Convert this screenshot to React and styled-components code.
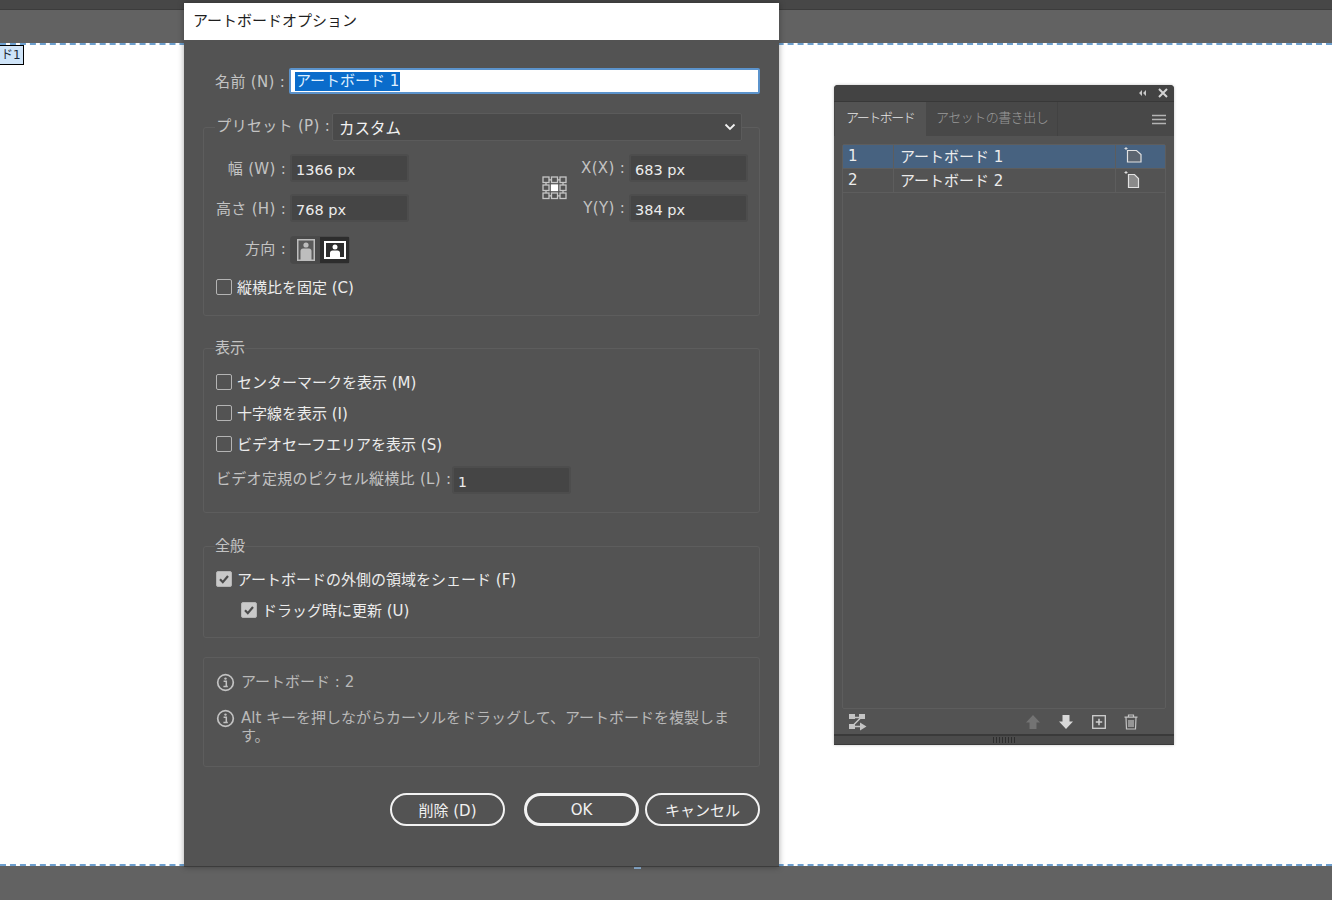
import styled, { createGlobalStyle } from 'styled-components'

const GlobalStyle = createGlobalStyle`
    * {
        box-sizing: border-box;
    }
    html, body {
        margin: 0;
        height: 100%;
        overflow: hidden;
        background: #636363;
    }
    body {
        font-family: "DejaVu Sans", "Noto Sans CJK JP", sans-serif;
        font-size: 15px;
    }
`

// Workspace behind the windows
const Workspace = styled.div`
    position: relative;
    width: 1332px;
    height: 900px;
    display: flex;
    flex-direction: column;
    overflow: hidden;
`
const MenuStrip = styled.div`
    height: 10px;
    background: #474747;
    border-bottom: 1px solid #3c3c3c;
`
const Pasteboard = styled.div`
    flex: ${(props) => (props.$grow ? 1 : 'none')};
    height: 33px;
    background: #626262;
`
const Artboard = styled.div`
    position: relative;
    height: 823px;
    background: #fff;
    border-top: 2px dashed #6d9fce;
    border-bottom: 2px dashed #6d9fce;
`
const ArtboardTag = styled.span`
    position: absolute;
    left: -1px;
    top: 0;
    width: 25px;
    height: 20px;
    padding-left: 1px;
    font-size: 12px;
    line-height: 18px;
    color: #1d2a38;
    background: #cfe4f8;
    border: 1px solid #000;
`
const Handle = styled.span`
    position: absolute;
    left: 634px;
    top: 867px;
    width: 7px;
    height: 2px;
    background: #8fb4d8;
`

// Dialog
const Dialog = styled.div`
    position: absolute;
    left: 184px;
    top: 3px;
    width: 595px;
    height: 864px;
    display: flex;
    flex-direction: column;
    background: #535353;
    border-bottom: 1px solid #3c3c3c;
    box-shadow: 0 0 6px rgba(0, 0, 0, 0.35);
`
const DialogTitle = styled.div`
    height: 37px;
    padding-left: 9px;
    font-size: 15px;
    line-height: 37px;
    color: #1f1f1f;
    background: #fff;
`
const DialogBody = styled.div`
    display: flex;
    flex-direction: column;
    padding: 28px 19px 0;
`
const Label = styled.label`
    width: ${(props) => props.$width || 70}px;
    flex: none;
    margin-top: -2px;
    text-align: right;
    white-space: nowrap;
    letter-spacing: 0.3px;
    color: #c3c3c3;
`
const LatinLabel = styled(Label)`
    margin-top: 0;
`
const RaisedLabel = styled(Label)`
    margin-top: -5px;
`
const NameRow = styled.div`
    display: flex;
    align-items: center;
    gap: 4px;
    padding-left: 12px;
    margin-bottom: 19px;
`
const NameField = styled.div`
    flex: 1;
    height: 26px;
    padding-left: 4px;
    display: flex;
    align-items: center;
    background: #fff;
    border: 2px solid #5b93cc;
    border-radius: 2px;
`
const Selected = styled.span`
    padding: 0 1px;
    line-height: 19px;
    color: #dff0ff;
    background: #0a6ccb;
`
const Group = styled.fieldset`
    margin: ${(props) => props.$gap || 0}px 0 0;
    padding: ${(props) => props.$pad || '8px 12px 13px'};
    min-width: 0;
    border: 1px solid #5d5d5d;
    border-radius: 3px;
`
const Legend = styled.legend`
    margin-left: -1px;
    padding: 0;
    line-height: 20px;
    color: #c3c3c3;
`
const PresetLegend = styled.legend`
    width: 527px;
    margin-left: -1px;
    padding: 0;
    display: flex;
    align-items: center;
    gap: 2px;
`
const Select = styled.div`
    flex: 1;
    height: 28px;
    padding: 0 5px 0 6px;
    display: flex;
    align-items: center;
    justify-content: space-between;
    font-size: 15.5px;
    color: #f2f2f2;
    background: #4a4a4a;
    border: 1px solid #5b5b5b;
    border-radius: 2px;
`
const SizeGrid = styled.div`
    display: flex;
    justify-content: space-between;
`
const FieldColumn = styled.div`
    display: flex;
    flex-direction: column;
    gap: 12px;
`
const FieldRow = styled.div`
    display: flex;
    align-items: center;
    gap: 4px;
`
const AnchorColumn = styled.div`
    display: flex;
    align-items: center;
    margin-left: 133px;
`
const RightColumn = styled(FieldColumn)`
    margin-left: 11px;
`
const NumberInput = styled.div`
    width: ${(props) => props.$width || 119}px;
    height: 28px;
    padding: 3px 0 0 4px;
    display: flex;
    align-items: center;
    font-size: ${(props) => props.$size || 14.5}px;
    color: #ececec;
    background: #454545;
    border: 2px solid #4d4d4d;
    border-radius: 3px;
`
const OrientationRow = styled(FieldRow)`
    margin-top: 14px;
`
const Segments = styled.div`
    display: flex;
    width: 60px;
    height: 28px;
    border: 1px solid #4a4a4a;
    border-radius: 3px;
`
const Segment = styled.div`
    flex: 1;
    display: flex;
    align-items: center;
    justify-content: center;
    background: ${(props) => (props.$active ? '#2d2d2d' : '#494949')};
`
const CheckRow = styled.div`
    height: 31px;
    display: flex;
    align-items: center;
    gap: 5px;
    margin-top: ${(props) => props.$gap || 0}px;
    padding-left: ${(props) => (props.$indent ? 25 : 0)}px;
    color: #ececec;
`
const Box = styled.span`
    width: 16px;
    height: 16px;
    flex: none;
    display: flex;
    align-items: center;
    justify-content: center;
    border: 1.5px solid #b4b4b4;
    border-radius: 2px;
    background: ${(props) => (props.$checked ? '#c9c9c9' : 'transparent')};
`
const RatioRow = styled(FieldRow)`
    margin-top: 7px;
`
const InfoLine = styled.div`
    display: flex;
    gap: 6px;
    line-height: 18px;
    color: #b9b9b9;
    margin-top: ${(props) => props.$gap || 0}px;
`
const InfoIcon = styled.svg`
    width: 19px;
    height: 19px;
    flex: none;
`
const Footer = styled.div`
    display: flex;
    justify-content: flex-end;
    margin-top: 26px;
`
const PillButton = styled.button`
    width: 115px;
    height: 33px;
    margin-left: ${(props) => props.$gap || 0}px;
    padding: 0;
    font: inherit;
    color: #f0f0f0;
    background: transparent;
    border: ${(props) => (props.$primary ? 3 : 2)}px solid #f2f2f2;
    border-radius: 17px;
`

// Artboards panel
const Panel = styled.div`
    position: absolute;
    left: 834px;
    top: 85px;
    width: 340px;
    height: 660px;
    display: flex;
    flex-direction: column;
    background: #535353;
    border-radius: 4px 4px 0 0;
    box-shadow: 0 0 3px rgba(0, 0, 0, 0.25);
`
const PanelTitle = styled.div`
    height: 17px;
    padding-right: 6px;
    display: flex;
    align-items: center;
    justify-content: flex-end;
    gap: 11px;
    background: #434343;
    border-radius: 4px 4px 0 0;
    border-bottom: 1px solid #383838;
`
const Tabs = styled.div`
    height: 34px;
    display: flex;
    align-items: stretch;
    background: #484848;
`
const Tab = styled.div`
    width: ${(props) => props.$width}px;
    margin-left: ${(props) => (props.$active ? 1 : 0)}px;
    padding: 5px 0 0 ${(props) => (props.$active ? 11 : 9)}px;
    font-size: 13px;
    letter-spacing: ${(props) => (props.$active ? -1.5 : -0.5)}px;
    font-weight: 300;
    white-space: nowrap;
    color: ${(props) => (props.$active ? '#e6e6e6' : '#9a9a9a')};
    background: ${(props) => (props.$active ? '#535353' : '#484848')};
    border-right: 1px solid ${(props) => (props.$active ? '#484848' : '#424242')};
`
const TabSpacer = styled.div`
    flex: 1;
    display: flex;
    align-items: center;
    justify-content: flex-end;
    padding-right: 8px;
`
const List = styled.div`
    flex: 1;
    margin: 8px 8px 0;
    border: 1px solid #5d5d5d;
    border-radius: 2px;
`
const ListRow = styled.div`
    height: 24px;
    display: grid;
    grid-template-columns: 50px 222px 1fr;
    align-items: stretch;
    color: #ececec;
    background: ${(props) => (props.$selected ? '#476280' : 'transparent')};
    border-bottom: 1px solid #5d5d5d;
`
const ListCell = styled.div`
    display: flex;
    align-items: center;
    padding-left: ${(props) => props.$pad}px;
    padding-bottom: 2px;
    border-left: ${(props) => (props.$first ? 'none' : '1px solid #5d5d5d')};
`
const PanelTools = styled.div`
    height: 25px;
    display: flex;
    align-items: center;
    padding: 0 36px 0 15px;
    gap: 17px;
`
const ToolSpacer = styled.div`
    flex: 1;
`
const PanelGrip = styled.div`
    height: 11px;
    display: flex;
    justify-content: center;
    align-items: center;
    gap: 2px;
    background: #4b4b4b;
    border-top: 2px solid #3a3a3a;
    border-bottom: 1px solid #3a3a3a;
`
const GripTick = styled.span`
    width: 1px;
    height: 6px;
    background: #2e2e2e;
`

function InfoGlyph() {
    return (
        <InfoIcon viewBox="0 0 19 19">
            <circle cx="9.5" cy="9.5" r="7.8" fill="none" stroke="#c2c2c2" strokeWidth="1.7" />
            <circle cx="9.5" cy="5.6" r="1.2" fill="#c2c2c2" />
            <path d="M7.6 8.2h2.7v5.2M7.4 13.6h4.4" fill="none" stroke="#c2c2c2" strokeWidth="1.5" />
        </InfoIcon>
    )
}

function CheckBox({ checked }) {
    return (
        <Box $checked={checked}>
            {checked && (
                <svg width="12" height="12" viewBox="0 0 12 12">
                    <path d="M2 6.3l2.8 2.9L10 3" fill="none" stroke="#4c4c4c" strokeWidth="2.2" />
                </svg>
            )}
        </Box>
    )
}

function AnchorGlyph() {
    const cells = []
    for (let row = 0; row < 3; row++) {
        for (let col = 0; col < 3; col++) {
            const center = row === 1 && col === 1
            cells.push(
                <rect
                    key={`${row}-${col}`}
                    x={1 + col * 8.5}
                    y={1 + row * 8}
                    width="6"
                    height="5.5"
                    fill={center ? '#fff' : 'none'}
                    stroke={center ? '#fff' : '#c6c6c6'}
                    strokeWidth="1.3"
                />
            )
        }
    }
    return (
        <svg width="26" height="24" viewBox="0 0 26 24">
            {cells}
            <path d="M7 3.8h2.5M15.5 3.8H18M7 19.8h2.5M15.5 19.8H18M4 6.5V9M4 14.5V17M21 6.5V9M21 14.5V17" stroke="#c6c6c6" strokeWidth="1.3" />
        </svg>
    )
}

function PortraitGlyph() {
    return (
        <svg width="18" height="22" viewBox="0 0 18 22">
            <rect x="0.75" y="0.75" width="16.5" height="20.5" fill="#5a5a5a" stroke="#bdbdbd" strokeWidth="1.5" />
            <circle cx="9" cy="6" r="2.6" fill="#bdbdbd" />
            <path d="M3.5 21v-9c0-1.5 1-2.5 2.5-2.5h6c1.5 0 2.5 1 2.5 2.5v9z" fill="#bdbdbd" />
        </svg>
    )
}

function LandscapeGlyph() {
    return (
        <svg width="22" height="18" viewBox="0 0 22 18">
            <rect x="1" y="1" width="20" height="16" fill="#2d2d2d" stroke="#fff" strokeWidth="2" />
            <circle cx="11" cy="6" r="2.5" fill="#fff" />
            <path d="M6 17v-5c0-1.5 1-2.5 2.5-2.5h5c1.5 0 2.5 1 2.5 2.5v5z" fill="#fff" />
        </svg>
    )
}

function PageGlyph({ wide }) {
    return wide ? (
        <svg width="20" height="18" viewBox="0 0 20 18">
            <path d="M3 0v3M1.5 1.500h3" stroke="#ddd" strokeWidth="1" />
            <path d="M4.5 3.500h9l4.500 4v7.500h-13.500z" fill="#5c6570" stroke="#e2e2e2" strokeWidth="1.2" />
        </svg>
    ) : (
        <svg width="20" height="18" viewBox="0 0 20 18">
            <path d="M3 0v3M1.5 1.500h3" stroke="#ddd" strokeWidth="1" />
            <path d="M5.5 3.500h6l4 4v9h-10z" fill="#8a8a8a" stroke="#e2e2e2" strokeWidth="1.2" />
        </svg>
    )
}

function RearrangeGlyph() {
    return (
        <svg width="18" height="18" viewBox="0 0 18 18">
            <g fill="#c4c4c4">
                <rect x="0" y="1" width="6" height="5" />
                <rect x="0" y="11" width="6" height="5" />
                <rect x="10" y="1" width="6" height="5" />
                <path d="M11 9.500l6.500 4-6.500 4z" />
            </g>
            <path d="M5 4.500h6M4.500 12l7-7M5 13.500h7" fill="none" stroke="#c4c4c4" strokeWidth="1.5" />
        </svg>
    )
}

function ArrowGlyph({ up, color }) {
    return (
        <svg width="16" height="16" viewBox="0 0 16 16">
            <path
                d={up ? 'M8 1l7 7.500h-3.500V15h-7V8.500H1z' : 'M8 15l7-7.500h-3.500V1h-7v6.500H1z'}
                fill={color}
            />
        </svg>
    )
}

function NewGlyph() {
    return (
        <svg width="16" height="16" viewBox="0 0 16 16">
            <rect x="1.7" y="1.7" width="12.6" height="12.6" fill="none" stroke="#d0d0d0" strokeWidth="1.3" />
            <path d="M8 4.800v6.400M4.800 8h6.400" stroke="#d0d0d0" strokeWidth="1.5" />
        </svg>
    )
}

function TrashGlyph() {
    return (
        <svg width="14" height="16" viewBox="0 0 14 16">
            <path d="M0.5 3.200h13M4.500 3V1h5v2M2 3.500l.5 11.500h9l.5-11.500M5 6v7M7 6v7M9 6v7" fill="none" stroke="#c4c4c4" strokeWidth="1.2" />
        </svg>
    )
}

function App() {
    return (
        <>
            <GlobalStyle />
            <Workspace>
                <MenuStrip />
                <Pasteboard />
                <Artboard>
                    <ArtboardTag>ド1</ArtboardTag>
                </Artboard>
                <Pasteboard $grow />
                <Handle />

                <Dialog>
                    <DialogTitle>アートボードオプション</DialogTitle>
                    <DialogBody>
                        <NameRow>
                            <Label>名前 (N) :</Label>
                            <NameField>
                                <Selected>アートボード 1</Selected>
                            </NameField>
                        </NameRow>

                        <Group $pad="13px 12px 13px">
                            <PresetLegend>
                                <RaisedLabel $width={115}>プリセット (P) :</RaisedLabel>
                                <Select>
                                    カスタム
                                    <svg width="12" height="8" viewBox="0 0 12 8">
                                        <path d="M1.5 1.500L6 6l4.500-4.500" fill="none" stroke="#f2f2f2" strokeWidth="1.8" />
                                    </svg>
                                </Select>
                            </PresetLegend>
                            <SizeGrid>
                                <FieldColumn>
                                    <FieldRow>
                                        <Label>幅 (W) :</Label>
                                        <NumberInput>1366 px</NumberInput>
                                    </FieldRow>
                                    <FieldRow>
                                        <Label>高さ (H) :</Label>
                                        <NumberInput>768 px</NumberInput>
                                    </FieldRow>
                                </FieldColumn>
                                <AnchorColumn>
                                    <AnchorGlyph />
                                </AnchorColumn>
                                <RightColumn>
                                    <FieldRow>
                                        <LatinLabel $width={46}>X(X) :</LatinLabel>
                                        <NumberInput>683 px</NumberInput>
                                    </FieldRow>
                                    <FieldRow>
                                        <LatinLabel $width={46}>Y(Y) :</LatinLabel>
                                        <NumberInput>384 px</NumberInput>
                                    </FieldRow>
                                </RightColumn>
                            </SizeGrid>
                            <OrientationRow>
                                <RaisedLabel>方向 :</RaisedLabel>
                                <Segments>
                                    <Segment>
                                        <PortraitGlyph />
                                    </Segment>
                                    <Segment $active>
                                        <LandscapeGlyph />
                                    </Segment>
                                </Segments>
                            </OrientationRow>
                            <CheckRow $gap={7}>
                                <CheckBox />
                                縦横比を固定 (C)
                            </CheckRow>
                        </Group>

                        <Group $gap={22} $pad="8px 12px 18px">
                            <Legend>表示</Legend>
                            <CheckRow>
                                <CheckBox />
                                センターマークを表示 (M)
                            </CheckRow>
                            <CheckRow>
                                <CheckBox />
                                十字線を表示 (I)
                            </CheckRow>
                            <CheckRow>
                                <CheckBox />
                                ビデオセーフエリアを表示 (S)
                            </CheckRow>
                            <RatioRow>
                                <RaisedLabel $width={232}>ビデオ定規のピクセル縦横比 (L) :</RaisedLabel>
                                <NumberInput $size={14}>1</NumberInput>
                            </RatioRow>
                        </Group>

                        <Group $gap={23} $pad="7px 12px 12px">
                            <Legend>全般</Legend>
                            <CheckRow>
                                <CheckBox checked />
                                アートボードの外側の領域をシェード (F)
                            </CheckRow>
                            <CheckRow $indent>
                                <CheckBox checked />
                                ドラッグ時に更新 (U)
                            </CheckRow>
                        </Group>

                        <Group $gap={19} $pad="15px 12px 21px">
                            <InfoLine>
                                <InfoGlyph />
                                アートボード : 2
                            </InfoLine>
                            <InfoLine $gap={17}>
                                <InfoGlyph />
                                <span>Alt キーを押しながらカーソルをドラッグして、アートボードを複製します。</span>
                            </InfoLine>
                        </Group>

                        <Footer>
                            <PillButton>削除 (D)</PillButton>
                            <PillButton $primary $gap={19}>OK</PillButton>
                            <PillButton $gap={6}>キャンセル</PillButton>
                        </Footer>
                    </DialogBody>
                </Dialog>

                <Panel>
                    <PanelTitle>
                        <svg width="9" height="8" viewBox="0 0 9 8">
                            <path d="M4 1L1 4l3 3zM8 1L5 4l3 3z" fill="#c8c8c8" />
                        </svg>
                        <svg width="10" height="10" viewBox="0 0 10 10">
                            <path d="M1 1l8 8M9 1l-8 8" stroke="#d4d4d4" strokeWidth="2" />
                        </svg>
                    </PanelTitle>
                    <Tabs>
                        <Tab $active $width={92}>アートボード</Tab>
                        <Tab $width={131}>アセットの書き出し</Tab>
                        <TabSpacer>
                            <svg width="14" height="11" viewBox="0 0 14 11">
                                <path d="M0 1.500h14M0 5.500h14M0 9.500h14" stroke="#b4b4b4" strokeWidth="1.5" />
                            </svg>
                        </TabSpacer>
                    </Tabs>
                    <List>
                        <ListRow $selected>
                            <ListCell $first $pad={5}>1</ListCell>
                            <ListCell $pad={6}>アートボード 1</ListCell>
                            <ListCell $pad={7}><PageGlyph wide /></ListCell>
                        </ListRow>
                        <ListRow>
                            <ListCell $first $pad={5}>2</ListCell>
                            <ListCell $pad={6}>アートボード 2</ListCell>
                            <ListCell $pad={7}><PageGlyph /></ListCell>
                        </ListRow>
                    </List>
                    <PanelTools>
                        <RearrangeGlyph />
                        <ToolSpacer />
                        <ArrowGlyph up color="#737373" />
                        <ArrowGlyph color="#d8d8d8" />
                        <NewGlyph />
                        <TrashGlyph />
                    </PanelTools>
                    <PanelGrip>
                        {[0, 1, 2, 3, 4, 5, 6, 7].map((n) => (
                            <GripTick key={n} />
                        ))}
                    </PanelGrip>
                </Panel>
            </Workspace>
        </>
    )
}

export default App
